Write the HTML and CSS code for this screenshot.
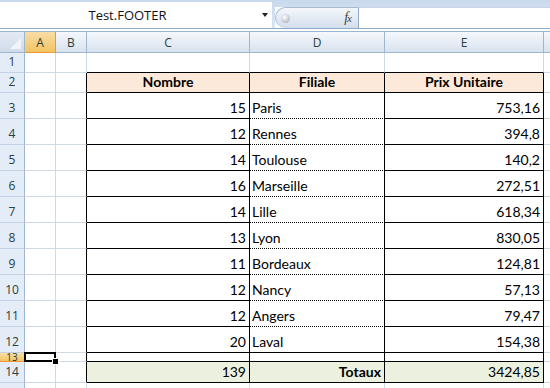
FILE: index.html
```html
<!DOCTYPE html>
<html lang="fr">
<head>
    <meta charset="UTF-8">
    <title>Test.FOOTER</title>
    <link rel="stylesheet" href="styles.css">
</head>
<body>
    <div class="topbar">
        <div class="namebox">
            <span class="name-text">Test.FOOTER</span>
            <span class="name-arrow"></span>
        </div>
        <div class="formula">
            <div class="fx-pill">
                <span class="knob"></span>
                <span class="fx">f<span class="fx-x">x</span></span>
            </div>
            <div class="formula-input"></div>
        </div>
    </div>
    <div class="gap"></div>

    <div class="sheet">
        <!-- column headers -->
        <div class="corner"><span class="corner-tri"></span></div>
        <div class="colhead sel">A</div>
        <div class="colhead">B</div>
        <div class="colhead">C</div>
        <div class="colhead">D</div>
        <div class="colhead">E</div>
        <div class="colhead"></div>

        <!-- row 1 -->
        <div class="rowhead">1</div>
        <div class="cell"></div><div class="cell"></div>
        <div class="cell above"></div><div class="cell above"></div><div class="cell above"></div>
        <div class="cell"></div>

        <!-- row 2 -->
        <div class="rowhead">2</div>
        <div class="cell"></div><div class="cell left-of"></div>
        <div class="cell tbl hd">Nombre</div>
        <div class="cell tbl hd">Filiale</div>
        <div class="cell tbl hd">Prix Unitaire</div>
        <div class="cell"></div>

        <div class="rowhead">3</div>
        <div class="cell"></div><div class="cell left-of"></div>
        <div class="cell tbl num">15</div><div class="cell tbl dot txt">Paris</div><div class="cell tbl num">753,16</div>
        <div class="cell"></div>

        <div class="rowhead">4</div>
        <div class="cell"></div><div class="cell left-of"></div>
        <div class="cell tbl num">12</div><div class="cell tbl dot txt">Rennes</div><div class="cell tbl num">394,8</div>
        <div class="cell"></div>

        <div class="rowhead">5</div>
        <div class="cell"></div><div class="cell left-of"></div>
        <div class="cell tbl num">14</div><div class="cell tbl dot txt">Toulouse</div><div class="cell tbl num">140,2</div>
        <div class="cell"></div>

        <div class="rowhead">6</div>
        <div class="cell"></div><div class="cell left-of"></div>
        <div class="cell tbl num">16</div><div class="cell tbl dot txt">Marseille</div><div class="cell tbl num">272,51</div>
        <div class="cell"></div>

        <div class="rowhead">7</div>
        <div class="cell"></div><div class="cell left-of"></div>
        <div class="cell tbl num">14</div><div class="cell tbl dot txt">Lille</div><div class="cell tbl num">618,34</div>
        <div class="cell"></div>

        <div class="rowhead">8</div>
        <div class="cell"></div><div class="cell left-of"></div>
        <div class="cell tbl num">13</div><div class="cell tbl dot txt">Lyon</div><div class="cell tbl num">830,05</div>
        <div class="cell"></div>

        <div class="rowhead">9</div>
        <div class="cell"></div><div class="cell left-of"></div>
        <div class="cell tbl num">11</div><div class="cell tbl dot txt">Bordeaux</div><div class="cell tbl num">124,81</div>
        <div class="cell"></div>

        <div class="rowhead">10</div>
        <div class="cell"></div><div class="cell left-of"></div>
        <div class="cell tbl num">12</div><div class="cell tbl dot txt">Nancy</div><div class="cell tbl num">57,13</div>
        <div class="cell"></div>

        <div class="rowhead">11</div>
        <div class="cell"></div><div class="cell left-of"></div>
        <div class="cell tbl num">12</div><div class="cell tbl dot txt">Angers</div><div class="cell tbl num">79,47</div>
        <div class="cell"></div>

        <div class="rowhead">12</div>
        <div class="cell"></div><div class="cell left-of"></div>
        <div class="cell tbl num">20</div><div class="cell tbl txt">Laval</div><div class="cell tbl num">154,38</div>
        <div class="cell"></div>

        <!-- row 13: the thin empty row, A13 selected -->
        <div class="rowhead sel short">13</div>
        <div class="cell active"></div><div class="cell left-of"></div>
        <div class="cell tbl"></div><div class="cell tbl"></div><div class="cell tbl"></div>
        <div class="cell"></div>

        <!-- row 14: totals -->
        <div class="rowhead">14</div>
        <div class="cell"></div><div class="cell left-of"></div>
        <div class="cell tbl tot num">139</div>
        <div class="cell tbl tot num bold">Totaux</div>
        <div class="cell tbl tot num">3424,85</div>
        <div class="cell"></div>

        <!-- top sliver of row 15 -->
        <div class="rowhead"></div>
        <div class="cell"></div><div class="cell"></div><div class="cell"></div>
        <div class="cell"></div><div class="cell"></div><div class="cell"></div>
    </div>
</body>
</html>
```

FILE: styles.css
```css
html, body {
    margin: 0;
    padding: 0;
}
body {
    width: 550px;
    height: 388px;
    overflow: hidden;
    background: #fff;
    font-family: Lato, "Liberation Sans", sans-serif;
}

/* formula bar */
.topbar {
    display: flex;
    height: 29px;
    box-sizing: border-box;
    background: linear-gradient(#c9d9ed, #dce6f3);
    border-bottom: 1px solid #8fa9c8;
}
.namebox {
    width: 272px;
    margin-top: 2px;
    background: #fff;
    display: flex;
    align-items: center;
    font-family: "Open Sans", sans-serif;
    font-size: 13px;
    color: #111;
}
.name-text {
    width: 255px;
    text-align: center;
}
.name-arrow {
    margin-left: 7px;
    width: 0;
    height: 0;
    border-left: 3px solid transparent;
    border-right: 3px solid transparent;
    border-top: 4px solid #222;
}
.formula {
    flex: 1;
    display: flex;
    margin-top: 7px;
    margin-left: 3px;
    background: #fff;
}
.fx-pill {
    width: 84px;
    box-sizing: border-box;
    display: flex;
    align-items: center;
    justify-content: space-between;
    padding: 0 7px 0 5px;
    border: 1px solid #a9bcd4;
    border-right-color: #8fa9c8;
    border-bottom: none;
    border-radius: 11px 0 0 11px;
    background: linear-gradient(#f4f7fb, #d3deec);
}
.knob {
    width: 9px;
    height: 9px;
    border-radius: 50%;
    background: radial-gradient(circle at 40% 35%, #fff, #b9c0c9 70%, #8f98a4);
}
.fx {
    font-family: "Liberation Serif", serif;
    font-style: italic;
    font-size: 14px;
    color: #444;
    letter-spacing: -1px;
}
.fx-x {
    font-size: 11px;
}
.formula-input {
    flex: 1;
    background: #fff;
    border-top: 1px solid #c6d4e6;
}
.gap {
    height: 2px;
}

/* sheet grid */
.sheet {
    display: grid;
    grid-template-columns: 25px 31px 31px 163px 135px 159px 1fr;
    grid-template-rows: 21px 20px 20px repeat(10, 26px) 9px 21px 6px;
    border-top: 1px solid #9eb6ce;
}
.corner, .colhead, .rowhead, .cell {
    box-sizing: border-box;
    border-right: 1px solid #d0d7e5;
    border-bottom: 1px solid #d0d7e5;
}
.corner {
    position: relative;
    background: linear-gradient(#e3eaf5, #cfdbeb);
    border-right-color: #9eb6ce;
    border-bottom-color: #9eb6ce;
}
.corner-tri {
    position: absolute;
    right: 3px;
    bottom: 3px;
    width: 0;
    height: 0;
    border-left: 11px solid transparent;
    border-bottom: 11px solid #f1f5fa;
}
.colhead {
    display: flex;
    align-items: center;
    justify-content: center;
    background: linear-gradient(#f5f8fc, #d9e2ef);
    border-right-color: #9eb6ce;
    border-bottom-color: #9eb6ce;
    font-family: "Open Sans", sans-serif;
    font-size: 12px;
    color: #27413e;
}
.rowhead {
    display: flex;
    align-items: flex-end;
    justify-content: center;
    padding-bottom: 2px;
    background: #e4ecf7;
    border-right-color: #9eb6ce;
    border-bottom-color: #c3d2e4;
    font-family: "Open Sans", sans-serif;
    font-size: 12px;
    color: #27413e;
    overflow: hidden;
}
.colhead.sel, .rowhead.sel {
    background: linear-gradient(#f9dda7, #f2c462);
    border-right-color: #f29536;
    border-bottom-color: #f29536;
}
.rowhead.short {
    align-items: flex-start;
    padding: 0;
    font-size: 10px;
    line-height: 8px;
}

/* cells */
.cell {
    display: flex;
    align-items: flex-end;
    padding: 0 3px 2px;
    font-size: 14px;
    color: #000;
    white-space: nowrap;
}
.above {
    border-bottom-color: #000;
}
.left-of {
    border-right-color: #000;
}
.tbl {
    border-right-color: #000;
    border-bottom-color: #000;
}
.tbl.dot {
    border-bottom-style: dotted;
}
.hd {
    justify-content: center;
    background: #fde9d9;
    font-weight: bold;
}
.num {
    justify-content: flex-end;
}
.txt {
    padding-left: 2px;
}
.tot {
    background: #ebf1de;
}
.bold {
    font-weight: bold;
}
.active {
    position: relative;
}
.active::after {
    content: "";
    position: absolute;
    top: -1px;
    left: -1px;
    right: -1px;
    bottom: -1px;
    border: 2px solid #000;
    z-index: 2;
}
.active::before {
    content: "";
    position: absolute;
    right: -3px;
    bottom: -3px;
    width: 5px;
    height: 5px;
    background: #000;
    outline: 1px solid #fff;
    z-index: 3;
}
```
